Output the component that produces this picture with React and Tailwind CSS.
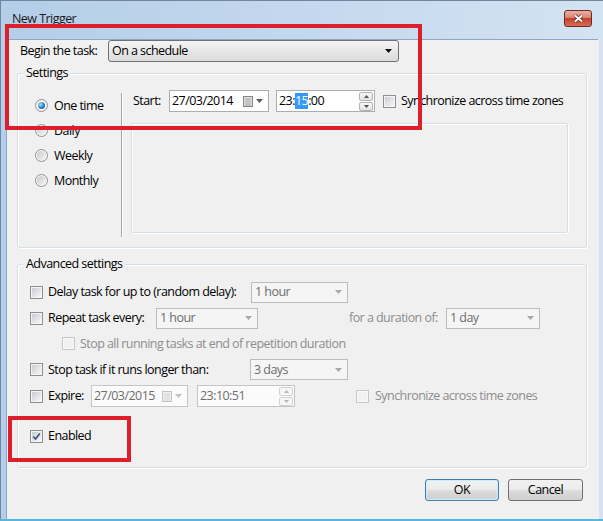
import React from 'react';

function Arrow({ color = '#000', up = false }) {
  return (
    <svg width="7" height="4" viewBox="0 0 7 4">
      <path d={up ? 'M0 4h7L3.5 0z' : 'M0 0h7L3.5 4z'} fill={color} />
    </svg>
  );
}

function SmallArrow({ color, up }) {
  return (
    <svg width="5" height="3" viewBox="0 0 5 3">
      <path d={up ? 'M0 3h5L2.5 0z' : 'M0 0h5L2.5 3z'} fill={color} />
    </svg>
  );
}

function Check({ checked, disabled }) {
  return (
    <span
      className={`relative flex h-[13px] w-[13px] shrink-0 items-center justify-center border ${
        disabled ? 'border-[#c8c8c8] bg-[#f8f8f8]' : 'border-[#8e8f8f] bg-[#f4f4f4]'
      }`}
    >
      <span
        className={`h-[9px] w-[9px] ${
          disabled ? 'bg-[#f1f1f1]' : 'bg-gradient-to-br from-[#c9cdd3] to-[#f7f7f7]'
        }`}
      />
      {checked && (
        <svg className="absolute left-[1px] top-[1px]" width="9" height="9" viewBox="0 0 9 9">
          <path d="M1.3 4.6L3.6 7L7.8 1.4" fill="none" stroke="#3d5687" strokeWidth="1.7" />
        </svg>
      )}
    </span>
  );
}

function Radio({ checked }) {
  return (
    <span className="flex h-[13px] w-[13px] shrink-0 items-center justify-center rounded-full border border-[#8e8f8f] bg-[#f6f6f6]">
      {checked ? (
        <span className="h-[7px] w-[7px] rounded-full bg-[radial-gradient(circle_at_35%_35%,#a6e4ff,#2a7fc4_55%,#144f86)]" />
      ) : (
        <span className="h-[9px] w-[9px] rounded-full bg-gradient-to-br from-[#c6c9ce] to-[#f6f6f6]" />
      )}
    </span>
  );
}

function Combo({ value, className }) {
  return (
    <div className={`flex h-[21px] items-center border border-[#b9bdc1] bg-[#f5f5f5] ${className}`}>
      <span className="flex-1 pl-[3px] text-[#6d6d6d]">{value}</span>
      <span className="flex w-[17px] justify-center">
        <Arrow color="#a8a8a8" />
      </span>
    </div>
  );
}

function CalIcon({ disabled }) {
  const stroke = disabled ? '#c4c4c4' : '#858585';
  return (
    <svg width="10" height="11" viewBox="0 0 10 11">
      <rect x="0.5" y="0.5" width="9" height="10" fill={disabled ? '#f0f0f0' : '#e0e0e0'} stroke={stroke} />
      <path d="M2 3h6M2 5h6M2 7h6M2 9h6" stroke={disabled ? '#d4d4d4' : '#a5a5a5'} />
    </svg>
  );
}

function DateBox({ value, disabled, className }) {
  return (
    <div
      className={`flex h-[22px] items-center border pl-[2px] ${
        disabled ? 'border-[#c2c5c9] bg-[#fbfbfb] text-[#6d6d6d]' : 'border-[#abadb3] bg-white'
      } ${className}`}
    >
      <span className="flex-1">{value}</span>
      <CalIcon disabled={disabled} />
      <span className="ml-[3px] mr-[5px] flex">
        <Arrow color={disabled ? '#c0c0c0' : '#5a5a5a'} />
      </span>
    </div>
  );
}

function Spin({ disabled }) {
  const c = disabled ? '#b8b8b8' : '#505050';
  const btn = `flex h-[9px] w-[14px] items-center justify-center rounded-[2px] border ${
    disabled ? 'border-[#d2d2d2] bg-[#f6f6f6]' : 'border-[#b4b4b4] bg-gradient-to-b from-[#f8f8f8] to-[#e2e2e2]'
  }`;
  return (
    <div className="mr-[1px] flex flex-col gap-[1px]">
      <span className={btn}>
        <SmallArrow color={c} up />
      </span>
      <span className={btn}>
        <SmallArrow color={c} />
      </span>
    </div>
  );
}

function TimeBox({ children, disabled, className }) {
  return (
    <div
      className={`flex h-[22px] items-center border pl-[2px] ${
        disabled ? 'border-[#c2c5c9] bg-[#fbfbfb] text-[#6d6d6d]' : 'border-[#abadb3] bg-white'
      } ${className}`}
    >
      <span className="flex flex-1">{children}</span>
      <Spin disabled={disabled} />
    </div>
  );
}

function Group({ label, className, children }) {
  return (
    <div
      className={`relative ml-[10px] w-[570px] rounded-[3px] border border-[#d5dfe5] shadow-[inset_1px_1px_0_#fff,1px_1px_0_#fff] ${className}`}
    >
      <span className="absolute left-[5px] top-[-9px] bg-[#f0f0f0] px-[3px]">{label}</span>
      {children}
    </div>
  );
}

const btnBg = 'bg-[linear-gradient(#f2f2f2,#ebebeb_50%,#dddddd_50%,#cfcfcf)]';

export default function App() {
  return (
    <div className="relative h-[521px] w-[603px] overflow-hidden border-b-2 border-[#5ab4df] bg-gradient-to-r from-[#b4cde8] to-[#d4e3f3] font-['Open_Sans',sans-serif] text-[12.5px] leading-[16px] tracking-[-0.55px] text-black shadow-[inset_1px_1px_0_#71869c]">
      {/* title bar */}
      <div className="flex h-[30px] items-start">
        <span className="ml-[12px] mt-[11px] text-[#1b1b1b]">New Trigger</span>
        <button className="ml-auto mr-[11px] mt-[10px] flex h-[17px] w-[28px] items-center justify-center rounded-[3px] border border-[#6e2b22] bg-[linear-gradient(#eab0a2,#d98272_45%,#c3432f_50%,#d66c55)]">
          <svg width="11" height="9" viewBox="0 0 11 9">
            <path d="M2 1.5L9 7.5M9 1.5L2 7.5" stroke="#5a2219" strokeWidth="3.4" />
            <path d="M2 1.5L9 7.5M9 1.5L2 7.5" stroke="#fff" strokeWidth="2" />
          </svg>
        </button>
      </div>

      {/* client area */}
      <div className="ml-[7px] h-[485px] w-[592px] bg-[#f0f0f0] shadow-[-1px_-1px_0_#8ea7c3]">
        <div className="mt-[10px] flex h-[22px] items-center pl-[13px]">
          <span className="w-[88px]">Begin the task:</span>
          <div className="flex h-[22px] w-[291px] items-center rounded-[3px] border border-[#707070] bg-gradient-to-b from-[#f4f4f4] to-[#dcdcdc]">
            <span className="flex-1 pl-[3px]">On a schedule</span>
            <span className="mr-[3px] flex w-[14px] justify-center">
              <Arrow color="#111" />
            </span>
          </div>
        </div>

        <Group label="Settings" className="mt-[11px] flex h-[175px]">
          <div className="mt-[19px] flex h-[144px] w-[104px] flex-col border-r border-[#a6a6a6] pl-[17px] shadow-[1px_0_0_#fff]">
            <label className="flex h-[25px] items-center gap-[6px]">
              <Radio checked />
              One time
            </label>
            <label className="flex h-[25px] items-center gap-[6px]">
              <Radio />
              Daily
            </label>
            <label className="flex h-[25px] items-center gap-[6px]">
              <Radio />
              Weekly
            </label>
            <label className="flex h-[25px] items-center gap-[6px]">
              <Radio />
              Monthly
            </label>
          </div>
          <div className="flex flex-col pt-[16px]">
            <div className="flex h-[22px] items-center pl-[11px]">
              <span className="w-[36px]">Start:</span>
              <DateBox value="27/03/2014" className="w-[100px]" />
              <TimeBox className="ml-[7px] w-[99px]">
                23:<span className="bg-[#3399ff] text-white">15</span>:00
              </TimeBox>
              <span className="ml-[8px]">
                <Check />
              </span>
              <span className="ml-[5px] whitespace-nowrap">Synchronize across time zones</span>
            </div>
            <div className="ml-[9px] mt-[11px] h-[110px] w-[437px] rounded-[2px] border border-[#d5dfe5] shadow-[inset_1px_1px_0_#fff,1px_1px_0_#fff]" />
          </div>
        </Group>

        <Group label="Advanced settings" className="mt-[16px] flex h-[204px] flex-col pl-[12px]">
          <div className="mt-[14px] flex h-[26px] items-center">
            <Check />
            <span className="ml-[5px] w-[203px]">Delay task for up to (random delay):</span>
            <Combo value="1 hour" className="w-[97px]" />
          </div>
          <div className="flex h-[26px] items-center">
            <Check />
            <span className="ml-[5px] w-[108px]">Repeat task every:</span>
            <Combo value="1 hour" className="w-[102px]" />
            <span className="ml-[91px] w-[97px] text-[#8d8d8d]">for a duration of:</span>
            <Combo value="1 day" className="w-[94px]" />
          </div>
          <div className="flex h-[25px] items-center pl-[32px]">
            <Check disabled />
            <span className="ml-[5px] text-[#8d8d8d]">Stop all running tasks at end of repetition duration</span>
          </div>
          <div className="flex h-[27px] items-center">
            <Check />
            <span className="ml-[5px] w-[202px]">Stop task if it runs longer than:</span>
            <Combo value="3 days" className="w-[98px]" />
          </div>
          <div className="flex h-[26px] items-center">
            <Check />
            <span className="ml-[5px] w-[43px]">Expire:</span>
            <DateBox value="27/03/2015" disabled className="w-[97px]" />
            <TimeBox disabled className="ml-[9px] w-[98px]">
              23:10:51
            </TimeBox>
            <span className="ml-[61px]">
              <Check disabled />
            </span>
            <span className="ml-[6px] text-[#8d8d8d]">Synchronize across time zones</span>
          </div>
          <div className="mt-[14px] flex h-[26px] items-center">
            <Check checked />
            <span className="ml-[5px]">Enabled</span>
          </div>
        </Group>

        <div className="mt-[11px] flex justify-end gap-[9px] pr-[16px]">
          <button
            className={`h-[22px] w-[74px] rounded-[3px] border border-[#3c7fb1] ${btnBg} shadow-[inset_0_0_0_1px_#c9eeff]`}
          >
            OK
          </button>
          <button className={`h-[22px] w-[75px] rounded-[3px] border border-[#707070] ${btnBg}`}>Cancel</button>
        </div>
      </div>

      {/* red annotation boxes */}
      <div className="pointer-events-none absolute left-[5px] top-[24px] h-[106px] w-[417px] border-[4px] border-[#dd1f2c]" />
      <div className="pointer-events-none absolute left-[8px] top-[416px] h-[46px] w-[123px] border-[4px] border-[#dd1f2c]" />
    </div>
  );
}
